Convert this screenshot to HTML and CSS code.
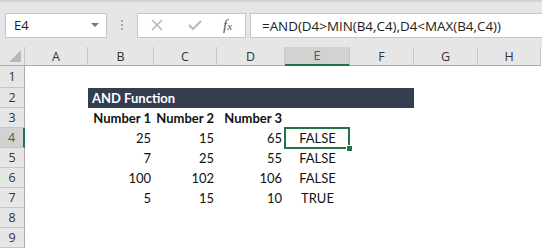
FILE: index.html
```html
<!DOCTYPE html>
<html lang="en">
  <head>
    <meta charset="UTF-8" />
    <title>AND Function</title>
    <link rel="stylesheet" href="styles.css">
  </head>
  <body>
    <div class="toolbar">
      <div class="name-box">
        <span>E4</span>
        <span class="caret"></span>
      </div>
      <div class="grip"><i></i><i></i><i></i></div>
      <div class="fx-box">
        <svg class="icon" width="14" height="14" viewBox="0 0 14 14">
          <path d="M2 2 L12 12 M12 2 L2 12" stroke="#b9b9b9" stroke-width="1.6" fill="none" />
        </svg>
        <svg class="icon" width="16" height="14" viewBox="0 0 16 14">
          <path d="M2 7 L6 11 L14 3" stroke="#b9b9b9" stroke-width="2" fill="none" />
        </svg>
        <span class="fx">f<sub>x</sub></span>
      </div>
      <div class="formula">=AND(D4&gt;MIN(B4,C4),D4&lt;MAX(B4,C4))</div>
    </div>

    <div class="sheet">
      <div class="corner"><span class="tri"></span></div>
      <div class="col-head">A</div>
      <div class="col-head">B</div>
      <div class="col-head">C</div>
      <div class="col-head">D</div>
      <div class="col-head active">E</div>
      <div class="col-head">F</div>
      <div class="col-head">G</div>
      <div class="col-head">H</div>

      <div class="row-head tall">1</div>
      <div class="cell wide"></div>

      <div class="row-head">2</div>
      <div class="cell"></div>
      <div class="cell title">AND Function</div>
      <div class="cell span2"></div>

      <div class="row-head">3</div>
      <div class="cell"></div>
      <div class="cell num bold">Number 1</div>
      <div class="cell num bold">Number 2</div>
      <div class="cell num bold">Number 3</div>
      <div class="cell span4"></div>

      <div class="row-head active">4</div>
      <div class="cell"></div>
      <div class="cell num">25</div>
      <div class="cell num">15</div>
      <div class="cell num">65</div>
      <div class="cell mid selected">FALSE</div>
      <div class="cell span3"></div>

      <div class="row-head">5</div>
      <div class="cell"></div>
      <div class="cell num">7</div>
      <div class="cell num">25</div>
      <div class="cell num">55</div>
      <div class="cell mid">FALSE</div>
      <div class="cell span3"></div>

      <div class="row-head">6</div>
      <div class="cell"></div>
      <div class="cell num">100</div>
      <div class="cell num">102</div>
      <div class="cell num">106</div>
      <div class="cell mid">FALSE</div>
      <div class="cell span3"></div>

      <div class="row-head">7</div>
      <div class="cell"></div>
      <div class="cell num">5</div>
      <div class="cell num">15</div>
      <div class="cell num">10</div>
      <div class="cell mid">TRUE</div>
      <div class="cell span3"></div>

      <div class="row-head">8</div>
      <div class="cell wide"></div>

      <div class="row-head">9</div>
      <div class="cell wide"></div>
    </div>
  </body>
</html>
```

FILE: styles.css
```css
body {
  margin: 0;
  background-color: #ffffff;
  font-family: Lato, "Open Sans", sans-serif;
  overflow: hidden;
}

/* formula bar strip */
.toolbar {
  display: flex;
  align-items: center;
  height: 45px;
  background-color: #e6e6e6;
  border-top: 2px solid #d4d4d4;
  padding-left: 5px;
}
.name-box {
  display: flex;
  align-items: center;
  justify-content: space-between;
  box-sizing: border-box;
  width: 102px;
  height: 25px;
  margin-top: 1px;
  padding: 0 7px 0 8px;
  background: white;
  border: 1px solid #c6c6c6;
  font-family: "Open Sans", sans-serif;
  font-size: 13px;
  color: #222;
}
.caret {
  width: 0;
  height: 0;
  border-left: 4px solid transparent;
  border-right: 4px solid transparent;
  border-top: 4px solid #777;
}
.grip {
  display: flex;
  flex-direction: column;
  gap: 2px;
  width: 30px;
  align-items: center;
  margin-top: 1px;
}
.grip i {
  width: 2px;
  height: 2px;
  background: #a6a6a6;
}
.fx-box {
  display: flex;
  align-items: center;
  box-sizing: border-box;
  width: 109px;
  height: 25px;
  margin-top: 1px;
  padding-left: 12px;
  background: white;
  border: 1px solid #c6c6c6;
}
.fx-box .icon {
  margin-right: 23px;
}
.fx-box .icon + .icon {
  margin-right: 20px;
}
.fx {
  font-family: "Liberation Serif", serif;
  font-style: italic;
  font-size: 15px;
  color: #555;
}
.fx sub {
  font-size: 11px;
  vertical-align: 0;
}
.formula {
  flex: 1;
  box-sizing: border-box;
  height: 25px;
  margin-top: 1px;
  margin-left: 4px;
  padding: 3px 0 0 11px;
  background: white;
  border: 1px solid #c6c6c6;
  border-right: none;
  font-family: "Open Sans", sans-serif;
  font-size: 13.4px;
  color: #222;
  white-space: nowrap;
}

/* worksheet grid */
.sheet {
  display: grid;
  grid-template-columns: 25px 63px 66px 63px 68px 65px 64px 64px 63px;
  grid-template-rows: 19px 22px repeat(8, 20px);
}
.corner {
  position: relative;
  background: #e6e6e6;
  border-right: 1px solid #c6c6c6;
  border-bottom: 1px solid #ababab;
}
.tri {
  position: absolute;
  right: 3px;
  bottom: 3px;
  width: 0;
  height: 0;
  border-left: 12px solid transparent;
  border-bottom: 12px solid #b7b7b7;
}
.col-head {
  display: flex;
  align-items: center;
  justify-content: center;
  background: #e6e6e6;
  border-right: 1px solid #c6c6c6;
  border-bottom: 1px solid #ababab;
  font-family: "Open Sans", sans-serif;
  font-size: 12.5px;
  color: #333;
}
.col-head.active {
  background: #d2d2d2;
  color: #217346;
  border-bottom: 2px solid #217346;
}
.row-head {
  display: flex;
  align-items: center;
  justify-content: center;
  background: #e6e6e6;
  border-right: 1px solid #ababab;
  border-bottom: 1px solid #c6c6c6;
  font-family: "Open Sans", sans-serif;
  font-size: 12.5px;
  color: #333;
}
.row-head.active {
  background: #d2d2d2;
  color: #217346;
  border-right: 2px solid #217346;
}
.cell {
  display: flex;
  align-items: center;
  padding: 0 3px;
  font-size: 13px;
  color: #111;
  white-space: nowrap;
}
.wide {
  grid-column: 2 / 10;
}
.span2 {
  grid-column: span 2;
}
.span3 {
  grid-column: span 3;
}
.span4 {
  grid-column: span 4;
}
.title {
  grid-column: 3 / 8;
  background: #333f50;
  color: white;
  font-weight: bold;
  padding-left: 4px;
}
.num {
  justify-content: flex-end;
}
.bold {
  font-weight: bold;
  overflow: visible;
}
.mid {
  justify-content: center;
}
.selected {
  position: relative;
}
.selected::after {
  content: "";
  position: absolute;
  left: -1px;
  top: -1px;
  right: 0;
  bottom: -1px;
  border: 2px solid #217346;
}
.selected::before {
  content: "";
  position: absolute;
  right: -3px;
  bottom: -4px;
  width: 5px;
  height: 5px;
  background: #217346;
  border: 1px solid white;
  z-index: 1;
}
```
